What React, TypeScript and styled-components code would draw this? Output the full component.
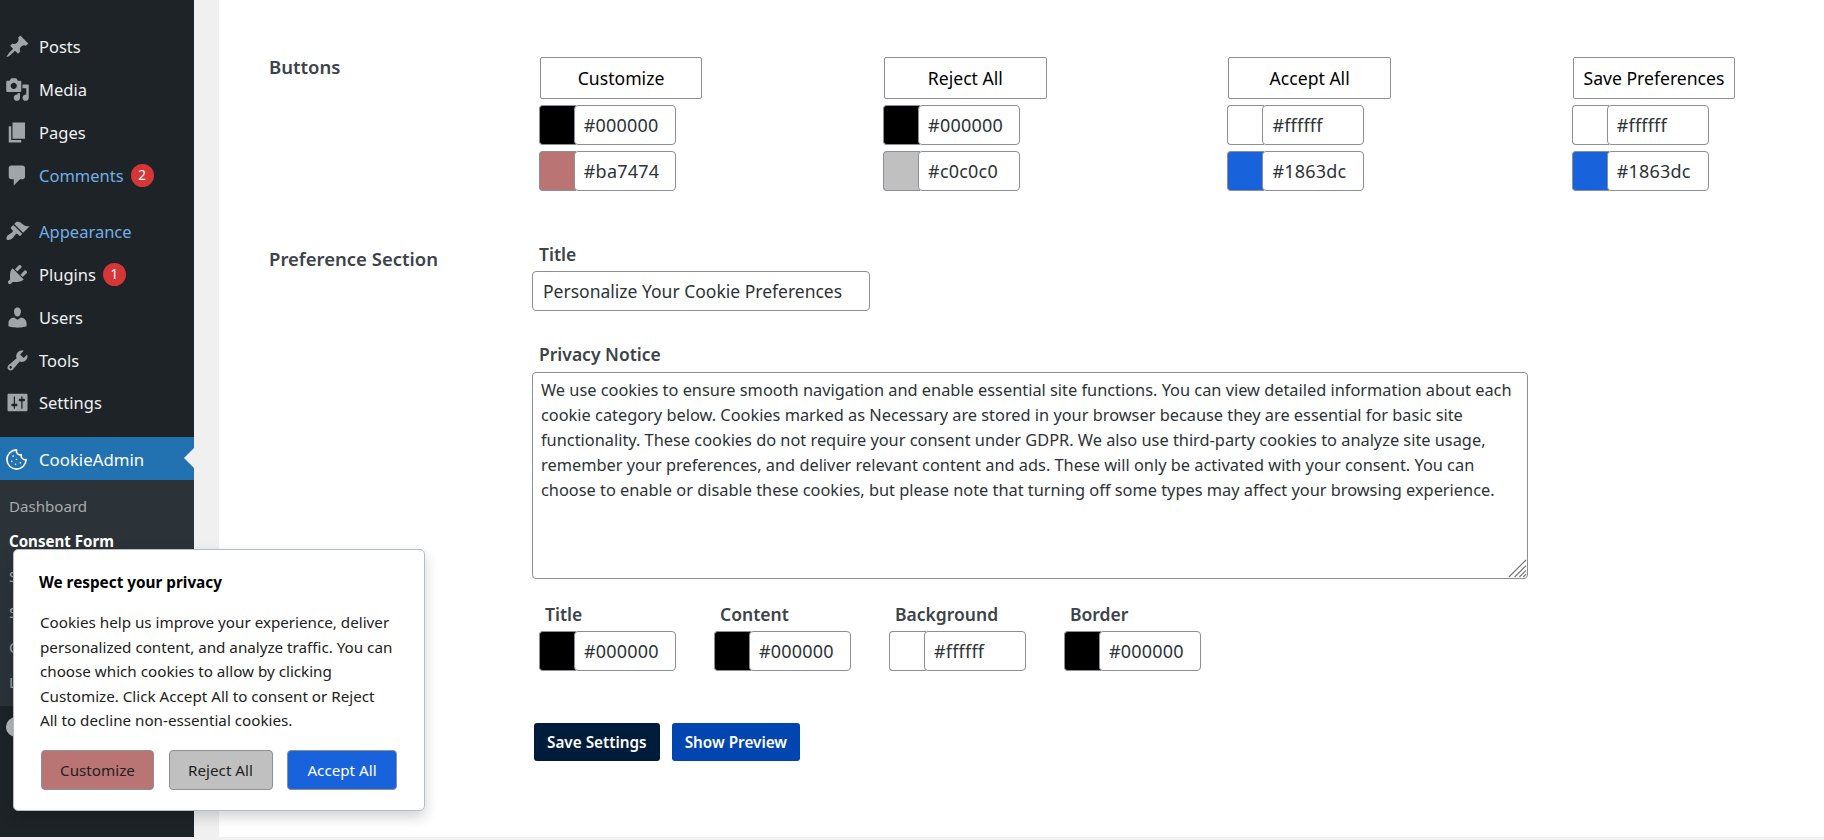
import React from 'react';
import styled, { createGlobalStyle } from 'styled-components';
import { Cookie } from 'lucide-react';

const dashicons: Record<string, string> = {
  posts:
    'M10.44 3.02l1.82-1.82 6.36 6.35-1.83 1.82c-1.05-.68-2.48-.57-3.41.36l-.75.75c-.92.93-1.04 2.35-.35 3.41l-1.83 1.82-2.41-2.41-2.8 2.79c-.42.42-3.38 2.71-3.8 2.29s1.86-3.39 2.28-3.81l2.79-2.79L4.1 9.36l1.83-1.82c1.05.69 2.48.57 3.4-.36l.75-.75c.93-.92 1.05-2.35.36-3.41z',
  media:
    'M13 11V4c0-.55-.45-1-1-1h-1.67L9 1H5L3.67 3H2c-.55 0-1 .45-1 1v7c0 .55.45 1 1 1h10c.55 0 1-.45 1-1zM7 4.5c1.38 0 2.5 1.12 2.5 2.5S8.38 9.5 7 9.5 4.5 8.38 4.5 7 5.62 4.5 7 4.5zM14 6h5v10.5c0 1.38-1.12 2.5-2.5 2.5S14 17.88 14 16.5s1.12-2.5 2.5-2.5c.17 0 .34.02.5.05V9h-3V6zm-4 8.05V13h2v3.5c0 1.38-1.12 2.5-2.5 2.5S7 17.88 7 16.5 8.12 14 9.5 14c.17 0 .34.02.5.05z',
  pages: 'M6 15V2h10v13H6zm-1 1h8v2H3V5h2v11z',
  comments:
    'M5 2h9c1.1 0 2 .9 2 2v7c0 1.1-.9 2-2 2h-2l-5 5v-5H5c-1.1 0-2-.9-2-2V4c0-1.1.9-2 2-2z',
  appearance:
    'M14.48 11.06L7.41 3.99l1.5-1.5c.5-.56 2.3-.47 3.51.32 1.21.8 1.43 1.28 2.91 2.1 1.18.64 2.45 1.26 4.45.85zm-.71.71L6.7 4.7 4.93 6.47c-.39.39-.39 1.02 0 1.41l1.06 1.06c.39.39.39 1.03 0 1.42-.6.6-1.43 1.11-2.21 1.69-.35.26-.7.53-1.01.84C1.43 13.23.78 15.78 1.53 16.53c.75.75 3.3.1 4.64-1.24.31-.31.58-.66.84-1.01.58-.78 1.09-1.61 1.69-2.21.39-.39 1.03-.39 1.42 0l1.06 1.06c.39.39 1.02.39 1.41 0z',
  plugins:
    'M13.11 4.36L9.87 7.6 8 5.73l3.24-3.24c.35-.34 1.05-.2 1.56.32.52.51.66 1.21.31 1.55zm-8 1.77l.91-1.12 9.01 9.01-1.19.84c-.71.71-2.63 1.16-3.82 1.16H6.14L4.9 17.26c-.59.59-1.54.59-2.12 0-.59-.58-.59-1.53 0-2.12l1.24-1.24v-3.88c0-1.13.4-3.19 1.09-3.89zm7.26 3.97l3.24-3.24c.34-.35 1.04-.21 1.55.31.52.51.66 1.21.31 1.55l-3.24 3.25z',
  users:
    'M10 9.25c-2.27 0-2.73-3.44-2.73-3.44C7 4.02 7.82 2 9.97 2c2.16 0 2.98 2.02 2.71 3.81 0 0-.41 3.44-2.68 3.44zm0 2.57L12.72 10c2.39 0 4.52 2.33 4.52 4.53v2.49s-3.65 1.13-7.24 1.13c-3.65 0-7.24-1.13-7.24-1.13v-2.49c0-2.25 1.94-4.48 4.47-4.48z',
  tools:
    'M16.68 9.77c-1.34 1.34-3.3 1.67-4.95.99l-5.41 6.52c-.99.99-2.59.99-3.58 0s-.99-2.59 0-3.57l6.52-5.42c-.68-1.65-.35-3.61.99-4.95 1.28-1.28 3.12-1.62 4.72-1.06l-2.89 2.89 2.82 2.82 2.86-2.87c.53 1.58.18 3.39-1.08 4.65zM3.81 16.21c.4.39 1.04.39 1.43 0 .4-.4.4-1.04 0-1.43-.39-.4-1.03-.4-1.43 0-.39.39-.39 1.03 0 1.43z',
  settings:
    'M18 16V4c0-.55-.45-1-1-1H3c-.55 0-1 .45-1 1v12c0 .55.45 1 1 1h14c.55 0 1-.45 1-1zM8 11h1c.55 0 1 .45 1 1s-.45 1-1 1H8v1.5c0 .28-.22.5-.5.5s-.5-.22-.5-.5V13H6c-.55 0-1-.45-1-1s.45-1 1-1h1V5.5c0-.28.22-.5.5-.5s.5.22.5.5V11zm5-2h-1c-.55 0-1-.45-1-1s.45-1 1-1h1V5.5c0-.28.22-.5.5-.5s.5.22.5.5V7h1c.55 0 1 .45 1 1s-.45 1-1 1h-1v5.5c0 .28-.22.5-.5.5s-.5-.22-.5-.5V9z',
};

const menu = [
  { key: 'posts', label: 'Posts' },
  { key: 'media', label: 'Media' },
  { key: 'pages', label: 'Pages' },
  { key: 'comments', label: 'Comments', badge: 2, blue: true },
  { key: 'appearance', label: 'Appearance', blue: true, gap: true },
  { key: 'plugins', label: 'Plugins', badge: 1 },
  { key: 'users', label: 'Users' },
  { key: 'tools', label: 'Tools' },
  { key: 'settings', label: 'Settings' },
];

const submenu = ['Dashboard', 'Consent Form', 'Scan', 'Settings', 'Cookies', 'License'];

const buttonColors = [
  { label: 'Customize', text: '#000000', bg: '#ba7474' },
  { label: 'Reject All', text: '#000000', bg: '#c0c0c0' },
  { label: 'Accept All', text: '#ffffff', bg: '#1863dc' },
  { label: 'Save Preferences', text: '#ffffff', bg: '#1863dc' },
];

const prefColors = [
  { label: 'Title', value: '#000000' },
  { label: 'Content', value: '#000000' },
  { label: 'Background', value: '#ffffff' },
  { label: 'Border', value: '#000000' },
];

const notice = `We use cookies to ensure smooth navigation and enable essential site functions. You can view detailed information about each cookie category below. Cookies marked as Necessary are stored in your browser because they are essential for basic site functionality. These cookies do not require your consent under GDPR. We also use third-party cookies to analyze site usage, remember your preferences, and deliver relevant content and ads. These will only be activated with your consent. You can choose to enable or disable these cookies, but please note that turning off some types may affect your browsing experience.`;

const ColorField = ({ value }: { value: string }) => (
  <ColorRow>
    <Swatch $color={value} />
    <HexInput type="text" defaultValue={value} />
  </ColorRow>
);

const App = () => (
  <Page>
    <GlobalStyle />
    <Sidebar>
      <Menu>
        {menu.map((item) => (
          <MenuItem key={item.key} $blue={item.blue} $gap={item.gap}>
            <MenuIcon viewBox="0 0 20 20">
              <path d={dashicons[item.key]} />
            </MenuIcon>
            {item.label}
            {item.badge && <Badge>{item.badge}</Badge>}
          </MenuItem>
        ))}
        <ActiveItem>
          <Cookie size={23} strokeWidth={1.7} />
          CookieAdmin
        </ActiveItem>
        <Submenu>
          {submenu.map((label) => (
            <SubItem key={label} $current={label === 'Consent Form'}>
              {label}
            </SubItem>
          ))}
        </Submenu>
        <CollapseItem>
          <CollapseDot />
          Collapse Menu
        </CollapseItem>
      </Menu>
    </Sidebar>

    <Card>
      <Section>
        <ButtonsLabel>Buttons</ButtonsLabel>
        <ButtonGrid>
          {buttonColors.map((b) => (
            <ButtonGroup key={b.label}>
              <PreviewButton>{b.label}</PreviewButton>
              <ColorField value={b.text} />
              <ColorField value={b.bg} />
            </ButtonGroup>
          ))}
        </ButtonGrid>
      </Section>

      <PreferenceSection>
        <SectionLabel>Preference Section</SectionLabel>
        <PreferenceBody>
          <FieldLabel>Title</FieldLabel>
          <TitleInput type="text" defaultValue="Personalize Your Cookie Preferences" />
          <NoticeLabel>Privacy Notice</NoticeLabel>
          <NoticeWrap>
            <NoticeArea defaultValue={notice} />
            <ResizeGrip viewBox="0 0 20 20">
              <path d="M1 19 19 1M7 19 19 7M12 19 19 12M16 19 19 16" />
            </ResizeGrip>
          </NoticeWrap>
          <PrefColors>
            {prefColors.map((c) => (
              <PrefColor key={c.label}>
                <PrefLabel>{c.label}</PrefLabel>
                <ColorField value={c.value} />
              </PrefColor>
            ))}
          </PrefColors>
          <Actions>
            <ActionButton $bg="#001c3b">Save Settings</ActionButton>
            <ActionButton $bg="#0045b0">Show Preview</ActionButton>
          </Actions>
        </PreferenceBody>
      </PreferenceSection>
    </Card>

    <ConsentPopup>
      <PopupTitle>We respect your privacy</PopupTitle>
      <PopupText>
        Cookies help us improve your experience, deliver personalized content, and analyze traffic.
        You can choose which cookies to allow by clicking Customize. Click Accept All to consent or
        Reject All to decline non-essential cookies.
      </PopupText>
      <PopupButtons>
        <PopupButton $bg="#ba7474" $width={113}>Customize</PopupButton>
        <PopupButton $bg="#c0c0c0" $width={104}>Reject All</PopupButton>
        <PopupButton $bg="#1863dc" $light $width={110}>Accept All</PopupButton>
      </PopupButtons>
    </ConsentPopup>
  </Page>
);

const GlobalStyle = createGlobalStyle`
  html, body {
    margin: 0;
    height: 100%;
    overflow: hidden;
    background: #f0f0f1;
  }
  body, input, textarea, button {
    font-family: "Noto Sans", "Open Sans", sans-serif;
  }
`;

const Page = styled.div`
  position: relative;
  display: flex;
  height: 837px;
`;

const Sidebar = styled.div`
  width: 194px;
  flex-shrink: 0;
  background: #1d2327;
  overflow: hidden;
`;

const Menu = styled.div`
  padding-top: 25.5px;
`;

const MenuItem = styled.div<{ $blue?: boolean; $gap?: boolean }>`
  display: flex;
  align-items: center;
  height: 42.8px;
  margin-top: ${(p) => (p.$gap ? '13.6px' : '0')};
  padding-left: 4.5px;
  font-size: 16.5px;
  color: ${(p) => (p.$blue ? '#72aee6' : '#f0f0f1')};
`;

const MenuIcon = styled.svg`
  width: 25px;
  height: 25px;
  margin-right: 9.5px;
  flex-shrink: 0;
  fill: #a0a5aa;
`;

const Badge = styled.span`
  display: flex;
  align-items: center;
  justify-content: center;
  width: 23px;
  height: 23px;
  margin-left: 7px;
  border-radius: 50%;
  background: #d63638;
  color: #fff;
  font-size: 13.5px;
`;

const ActiveItem = styled.div`
  position: relative;
  display: flex;
  align-items: center;
  gap: 11px;
  height: 43px;
  box-sizing: border-box;
  margin-top: 12.7px;
  padding: 2px 0 0 5px;
  background: #2271b1;
  color: #fff;
  font-size: 16.8px;

  &::after {
    content: '';
    position: absolute;
    right: 0;
    top: 11px;
    border: 10px solid transparent;
    border-right-color: #f0f0f1;
    border-left-width: 0;
  }
`;

const Submenu = styled.div`
  display: flex;
  flex-direction: column;
  height: 226px;
  padding-top: 8.5px;
  box-sizing: border-box;
  background: #2c3338;
`;

const SubItem = styled.div<{ $current?: boolean }>`
  display: flex;
  align-items: center;
  height: 35.2px;
  padding-left: 9px;
  font-size: 15.1px;
  font-weight: ${(p) => (p.$current ? 700 : 400)};
  color: ${(p) => (p.$current ? '#fff' : '#a7aaad')};
`;

const CollapseItem = styled.div`
  display: flex;
  align-items: center;
  gap: 11px;
  height: 43px;
  padding-left: 6px;
  color: #a7aaad;
  font-size: 16.5px;
`;

const CollapseDot = styled.span`
  width: 20px;
  height: 20px;
  border-radius: 50%;
  background: #b5b8bb;
`;

const Card = styled.div`
  flex: 1;
  margin-left: 25px;
  padding: 57px 0 0 50px;
  background: #fff;
  color: #3c434a;
`;

const Section = styled.div`
  display: flex;
`;

const PreferenceSection = styled(Section)`
  margin-top: 57px;
`;

const SectionLabel = styled.div`
  width: 263px;
  flex-shrink: 0;
  font-size: 18.5px;
  font-weight: 600;
  line-height: 22px;
`;

const ButtonsLabel = styled(SectionLabel)`
  margin-top: -1px;
`;

const ButtonGrid = styled.div`
  display: grid;
  grid-template-columns: repeat(3, 344.3px) auto;
  padding-left: 6.8px;
`;

const ButtonGroup = styled.div`
  display: flex;
  flex-direction: column;
  align-items: flex-start;
  gap: 6px;
`;

const PreviewButton = styled.button`
  width: 162.5px;
  height: 42px;
  margin-left: 1px;
  padding: 0;
  background: #fff;
  border: 1px solid #8c8f94;
  border-radius: 2px;
  color: #000;
  font-size: 17.6px;
`;

const ColorRow = styled.div`
  display: flex;
  width: 137px;
  height: 40px;
`;

const Swatch = styled.span<{ $color: string }>`
  width: 37px;
  flex-shrink: 0;
  box-sizing: border-box;
  margin-right: -2px;
  background: ${(p) => p.$color};
  border: 1px solid #8c8f94;
  border-right: 0;
  border-radius: 4px 0 0 4px;
`;

const HexInput = styled.input`
  position: relative;
  flex: 1;
  min-width: 0;
  box-sizing: border-box;
  padding: 0 0 0 9px;
  background: #fff;
  border: 1px solid #8c8f94;
  border-radius: 4px;
  color: #2c3338;
  font-size: 18px;
  letter-spacing: 0.2px;
  outline: none;
`;

const PreferenceBody = styled.div`
  display: flex;
  flex-direction: column;
  align-items: flex-start;
  margin-top: -5px;
`;

const FieldLabel = styled.div`
  margin-left: 7px;
  font-size: 17.5px;
  font-weight: 600;
  line-height: 22px;
`;

const NoticeLabel = styled(FieldLabel)`
  margin-top: 32px;
`;

const TitleInput = styled.input`
  width: 338px;
  height: 40px;
  margin-top: 6px;
  box-sizing: border-box;
  padding: 0 10px;
  background: #fff;
  border: 1px solid #8c8f94;
  border-radius: 4px;
  color: #2c3338;
  font-size: 17.5px;
  outline: none;
`;

const NoticeWrap = styled.div`
  position: relative;
  width: 996px;
  height: 207px;
  margin-top: 7px;
`;

const NoticeArea = styled.textarea`
  display: block;
  width: 100%;
  height: 100%;
  box-sizing: border-box;
  padding: 5px 8px;
  background: #fff;
  border: 1px solid #8c8f94;
  border-radius: 4px;
  color: #2c3338;
  font-size: 16.35px;
  line-height: 25px;
  outline: none;
  resize: none;
`;

const ResizeGrip = styled.svg`
  position: absolute;
  right: 1px;
  bottom: 1px;
  width: 19px;
  height: 19px;
  stroke: #777;
  stroke-width: 1.3;
  fill: none;
`;

const PrefColors = styled.div`
  display: grid;
  grid-template-columns: repeat(4, 175px);
  margin: 24px 0 0 7px;
`;

const PrefColor = styled.div`
  display: flex;
  flex-direction: column;
  gap: 6px;
`;

const PrefLabel = styled.div`
  margin-left: 6px;
  font-size: 17.5px;
  font-weight: 600;
  line-height: 22px;
`;

const Actions = styled.div`
  display: flex;
  gap: 12px;
  margin: 52px 0 0 2px;
`;

const ActionButton = styled.button<{ $bg: string }>`
  height: 38px;
  padding: 0 13px;
  background: ${(p) => p.$bg};
  border: 0;
  border-radius: 3px;
  color: #fff;
  font-size: 15.3px;
  font-weight: 600;
`;

const ConsentPopup = styled.div`
  position: absolute;
  left: 13px;
  top: 549px;
  width: 412px;
  height: 262px;
  box-sizing: border-box;
  padding: 22px 26px;
  background: #fff;
  border: 1px solid #b4bcc8;
  border-radius: 5px;
  box-shadow: 0 6px 14px rgba(0, 0, 0, 0.18);
`;

const PopupTitle = styled.div`
  margin-left: -1px;
  color: #000;
  font-size: 15.3px;
  font-weight: 700;
  line-height: 20px;
`;

const PopupText = styled.p`
  max-width: 354px;
  margin: 18px 0 0;
  color: #212121;
  font-size: 15.2px;
  line-height: 24.5px;
`;

const PopupButtons = styled.div`
  display: flex;
  gap: 14.5px;
  margin: 17px 0 0 1px;
`;

const PopupButton = styled.button<{ $bg: string; $light?: boolean; $width: number }>`
  width: ${(p) => p.$width}px;
  height: 40px;
  padding: 0;
  background: ${(p) => p.$bg};
  border: 1px solid #8c8f94;
  border-radius: 4px;
  color: ${(p) => (p.$light ? '#fff' : '#222')};
  font-size: 15.2px;
`;

export default App;
